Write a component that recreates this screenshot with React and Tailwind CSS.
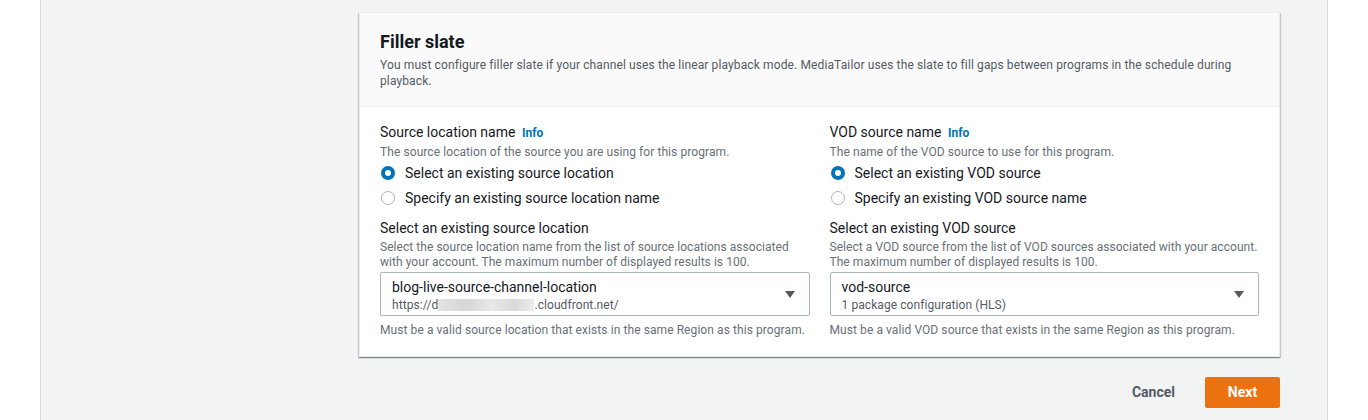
function Radio({ checked, label }) {
  return (
    <label className="flex items-center h-[22px] gap-[10px] pl-[1px]">
      {checked ? (
        <span className="w-[14px] h-[14px] rounded-full bg-[#0073bb] flex items-center justify-center">
          <span className="w-[6px] h-[6px] rounded-full bg-white"></span>
        </span>
      ) : (
        <span className="w-[14px] h-[14px] rounded-full border border-[#aab7b8] bg-white"></span>
      )}
      <span className="text-[14px] text-[#16191f]">{label}</span>
    </label>
  );
}

function Field({ title, desc, options, selectTitle, selectDesc, value, sub, hint }) {
  return (
    <div>
      <div className="text-[14px] leading-[22px] text-[#16191f]">
        {title} <span className="ml-[3px] text-[12px] font-bold text-[#0073bb]">Info</span>
      </div>
      <p className="text-[12px] leading-[16px] tracking-[0.08px] text-[#687078]">{desc}</p>
      <div className="mt-[2px] flex flex-col gap-[3px]">
        <Radio checked label={options[0]} />
        <Radio label={options[1]} />
      </div>
      <div className="mt-[8px] text-[14px] leading-[22px] text-[#16191f]">{selectTitle}</div>
      <p className="pt-[1px] text-[12px] leading-[15px] tracking-[0.05px] text-[#687078]">{selectDesc}</p>
      <div className="mt-[2px] h-[44px] border border-[#aab7b8] rounded-[2px] bg-white flex items-center justify-between pl-[11px] pr-[14px]">
        <div className="pt-[3px]">
          <div className="text-[14px] leading-[18px] text-[#16191f]">{value}</div>
          <div className="text-[12px] leading-[18px] tracking-[0.08px] text-[#545b64]">{sub}</div>
        </div>
        <svg width="10" height="7" viewBox="0 0 10 7">
          <path d="M0 0H10L5 7Z" fill="#545b64" />
        </svg>
      </div>
      <p className="mt-[6px] text-[12px] leading-[16px] tracking-[0.08px] text-[#687078]">{hint}</p>
    </div>
  );
}

export default function App() {
  return (
    <div className="flex h-[420px] bg-white overflow-hidden" style={{ fontFamily: 'Roboto, "Open Sans", sans-serif' }}>
      <div className="w-[40px] shrink-0"></div>
      <div className="w-[1288px] shrink-0 bg-[#f2f3f3] border-l border-r border-[#d5dbdb] pl-[318px] pt-[12px]">
        <div className="w-[921px] bg-white border border-[#eaeded] shadow-[0_1px_1px_0_rgba(0,28,36,0.3),1px_1px_1px_0_rgba(0,28,36,0.15),-1px_1px_1px_0_rgba(0,28,36,0.15)]">
          <div className="bg-[#fafafa] border-b border-[#eaeded] px-5 pt-[18px] pb-[17px]">
            <h2 className="text-[18px] leading-[22px] font-bold text-[#16191f]">Filler slate</h2>
            <p className="mt-[4px] text-[12px] leading-[16px] tracking-[0.12px] text-[#545b64]">
              You must configure filler slate if your channel uses the linear playback mode. MediaTailor uses the slate to fill gaps between programs in the schedule during playback.
            </p>
          </div>
          <div className="grid grid-cols-2 gap-5 px-5 pt-[14px] pb-[18px]">
            <Field
              title="Source location name"
              desc="The source location of the source you are using for this program."
              options={['Select an existing source location', 'Specify an existing source location name']}
              selectTitle="Select an existing source location"
              selectDesc="Select the source location name from the list of source locations associated with your account. The maximum number of displayed results is 100."
              value="blog-live-source-channel-location"
              sub={
                <span className="flex items-center">
                  https://d
                  <span className="inline-block w-[96px] h-[12px] bg-[linear-gradient(90deg,#e4e4e4,#d6d6d6_30%,#e8e8e8_55%,#d9d9d9_80%,#ececec)]"></span>
                  .cloudfront.net/
                </span>
              }
              hint="Must be a valid source location that exists in the same Region as this program."
            />
            <Field
              title="VOD source name"
              desc="The name of the VOD source to use for this program."
              options={['Select an existing VOD source', 'Specify an existing VOD source name']}
              selectTitle="Select an existing VOD source"
              selectDesc="Select a VOD source from the list of VOD sources associated with your account. The maximum number of displayed results is 100."
              value="vod-source"
              sub="1 package configuration (HLS)"
              hint="Must be a valid VOD source that exists in the same Region as this program."
            />
          </div>
        </div>
        <div className="w-[921px] flex justify-end items-center gap-[30px] mt-[20px]">
          <button className="text-[14px] font-bold text-[#545b64]">Cancel</button>
          <button className="h-[31px] w-[75px] rounded-[2px] bg-[#ec7211] text-white text-[14px] font-bold">Next</button>
        </div>
      </div>
    </div>
  );
}
